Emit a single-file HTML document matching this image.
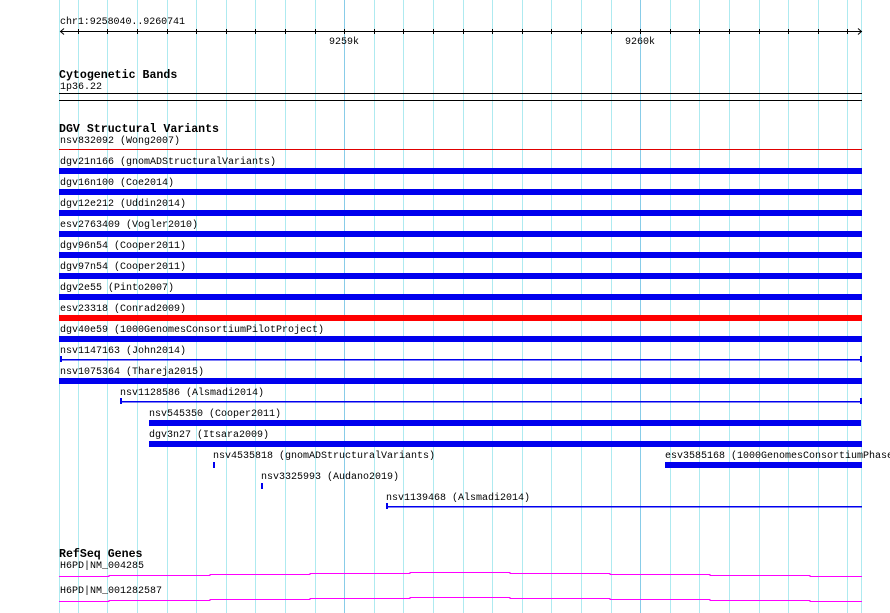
<!DOCTYPE html>
<html><head><meta charset="utf-8"><style>
html,body{margin:0;padding:0;background:#fff;}
svg{display:block;}
text{font-family:"Liberation Mono",monospace;font-size:10px;fill:#000;}
.h{font-weight:bold;font-size:11.6px;}
</style></head><body>
<svg width="890" height="613" viewBox="0 0 890 613" xmlns="http://www.w3.org/2000/svg">
<g stroke-width="1" shape-rendering="crispEdges">
<line x1="59.5" y1="0" x2="59.5" y2="613" stroke="#aeeaf0"/>
<line x1="861.5" y1="0" x2="861.5" y2="613" stroke="#aeeaf0"/>
<line x1="78.5" y1="0" x2="78.5" y2="613" stroke="#aeeaf0"/>
<line x1="107.5" y1="0" x2="107.5" y2="613" stroke="#aeeaf0"/>
<line x1="137.5" y1="0" x2="137.5" y2="613" stroke="#aeeaf0"/>
<line x1="167.5" y1="0" x2="167.5" y2="613" stroke="#aeeaf0"/>
<line x1="196.5" y1="0" x2="196.5" y2="613" stroke="#aeeaf0"/>
<line x1="226.5" y1="0" x2="226.5" y2="613" stroke="#aeeaf0"/>
<line x1="255.5" y1="0" x2="255.5" y2="613" stroke="#aeeaf0"/>
<line x1="285.5" y1="0" x2="285.5" y2="613" stroke="#aeeaf0"/>
<line x1="315.5" y1="0" x2="315.5" y2="613" stroke="#aeeaf0"/>
<line x1="344.5" y1="0" x2="344.5" y2="613" stroke="#88cce8"/>
<line x1="374.5" y1="0" x2="374.5" y2="613" stroke="#aeeaf0"/>
<line x1="403.5" y1="0" x2="403.5" y2="613" stroke="#aeeaf0"/>
<line x1="433.5" y1="0" x2="433.5" y2="613" stroke="#aeeaf0"/>
<line x1="463.5" y1="0" x2="463.5" y2="613" stroke="#aeeaf0"/>
<line x1="492.5" y1="0" x2="492.5" y2="613" stroke="#aeeaf0"/>
<line x1="522.5" y1="0" x2="522.5" y2="613" stroke="#aeeaf0"/>
<line x1="551.5" y1="0" x2="551.5" y2="613" stroke="#aeeaf0"/>
<line x1="581.5" y1="0" x2="581.5" y2="613" stroke="#aeeaf0"/>
<line x1="611.5" y1="0" x2="611.5" y2="613" stroke="#aeeaf0"/>
<line x1="640.5" y1="0" x2="640.5" y2="613" stroke="#88cce8"/>
<line x1="670.5" y1="0" x2="670.5" y2="613" stroke="#aeeaf0"/>
<line x1="699.5" y1="0" x2="699.5" y2="613" stroke="#aeeaf0"/>
<line x1="729.5" y1="0" x2="729.5" y2="613" stroke="#aeeaf0"/>
<line x1="759.5" y1="0" x2="759.5" y2="613" stroke="#aeeaf0"/>
<line x1="788.5" y1="0" x2="788.5" y2="613" stroke="#aeeaf0"/>
<line x1="818.5" y1="0" x2="818.5" y2="613" stroke="#aeeaf0"/>
<line x1="847.5" y1="0" x2="847.5" y2="613" stroke="#aeeaf0"/>
</g>
<g stroke="#000" shape-rendering="crispEdges">
<line x1="60" y1="31.5" x2="862" y2="31.5"/>
<path d="M64 28.5 L60.5 31.5 L64 34.5 M858 28.5 L861.5 31.5 L858 34.5" fill="none" shape-rendering="auto"/>
<path d="M78.5 29v5M107.5 29v5M137.5 29v5M167.5 29v5M196.5 29v5M226.5 29v5M255.5 29v5M285.5 29v5M315.5 29v5M344.5 29v5M374.5 29v5M403.5 29v5M433.5 29v5M463.5 29v5M492.5 29v5M522.5 29v5M551.5 29v5M581.5 29v5M611.5 29v5M640.5 29v5M670.5 29v5M699.5 29v5M729.5 29v5M759.5 29v5M788.5 29v5M818.5 29v5M847.5 29v5"/>
<line x1="59" y1="93.5" x2="862" y2="93.5"/>
<line x1="59" y1="100.5" x2="862" y2="100.5"/>
</g>
<text x="60" y="24" textLength="125">chr1:9258040..9260741</text>
<text x="329" y="44">9259k</text>
<text x="625" y="44">9260k</text>
<text class="h" x="59" y="78">Cytogenetic Bands</text>
<text x="60" y="89">1p36.22</text>
<text class="h" x="59" y="132">DGV Structural Variants</text>
<text x="60" y="143">nsv832092 (Wong2007)</text>
<rect x="59" y="149" width="803" height="1" fill="#e00000"/>

<g fill="#0000ee">
<rect x="59" y="168" width="803" height="6"/>
<rect x="59" y="189" width="803" height="6"/>
<rect x="59" y="210" width="803" height="6"/>
<rect x="59" y="231" width="803" height="6"/>
<rect x="59" y="252" width="803" height="6"/>
<rect x="59" y="273" width="803" height="6"/>
<rect x="59" y="294" width="803" height="6"/>
<rect x="59" y="315" width="803" height="6" fill="#ff0000"/>
<rect x="59" y="336" width="803" height="6"/>
<rect x="60" y="359" width="802" height="1.5"/><rect x="60" y="356" width="2" height="6"/><rect x="860" y="356" width="2" height="6"/>
<rect x="59" y="378" width="803" height="6"/>
<rect x="120" y="401" width="742" height="1.5"/><rect x="120" y="398" width="2" height="6"/><rect x="860" y="398" width="2" height="6"/>
<rect x="149" y="420" width="712" height="6"/>
<rect x="149" y="441" width="713" height="6"/>
<rect x="213" y="462" width="2" height="6"/>
<rect x="665" y="462" width="197" height="6"/>
<rect x="261" y="483" width="2" height="6"/>
<rect x="386" y="506" width="476" height="1.5"/><rect x="386" y="503" width="2" height="6"/>
</g>
<text x="60" y="164">dgv21n166 (gnomADStructuralVariants)</text>
<text x="60" y="185">dgv16n100 (Coe2014)</text>
<text x="60" y="206">dgv12e212 (Uddin2014)</text>
<text x="60" y="227">esv2763409 (Vogler2010)</text>
<text x="60" y="248">dgv96n54 (Cooper2011)</text>
<text x="60" y="269">dgv97n54 (Cooper2011)</text>
<text x="60" y="290">dgv2e55 (Pinto2007)</text>
<text x="60" y="311">esv23318 (Conrad2009)</text>
<text x="60" y="332">dgv40e59 (1000GenomesConsortiumPilotProject)</text>
<text x="60" y="353">nsv1147163 (John2014)</text>
<text x="60" y="374">nsv1075364 (Thareja2015)</text>
<text x="120" y="395">nsv1128586 (Alsmadi2014)</text>
<text x="149" y="416">nsv545350 (Cooper2011)</text>
<text x="149" y="437">dgv3n27 (Itsara2009)</text>
<text x="213" y="458">nsv4535818 (gnomADStructuralVariants)</text>
<text x="665" y="458">esv3585168 (1000GenomesConsortiumPhase3)</text>
<text x="261" y="479">nsv3325993 (Audano2019)</text>
<text x="386" y="500">nsv1139468 (Alsmadi2014)</text>

<text class="h" x="59" y="557">RefSeq Genes</text>
<text x="60" y="568">H6PD|NM_004285</text>
<text x="60" y="593">H6PD|NM_001282587</text>
<g fill="none" stroke="#ff00ff" stroke-width="1.2" shape-rendering="crispEdges">
<path d="M59 576.5H109V575.5H210V574.5H310V573.5H410V572.5H510V573.5H610V574.5H710V575.5H810V576.5H862"/>
<path d="M59 601.5H109V600.5H210V599.5H310V598.5H410V597.5H510V598.5H610V599.5H710V600.5H810V601.5H862"/>
</g>
</svg>
</body></html>
